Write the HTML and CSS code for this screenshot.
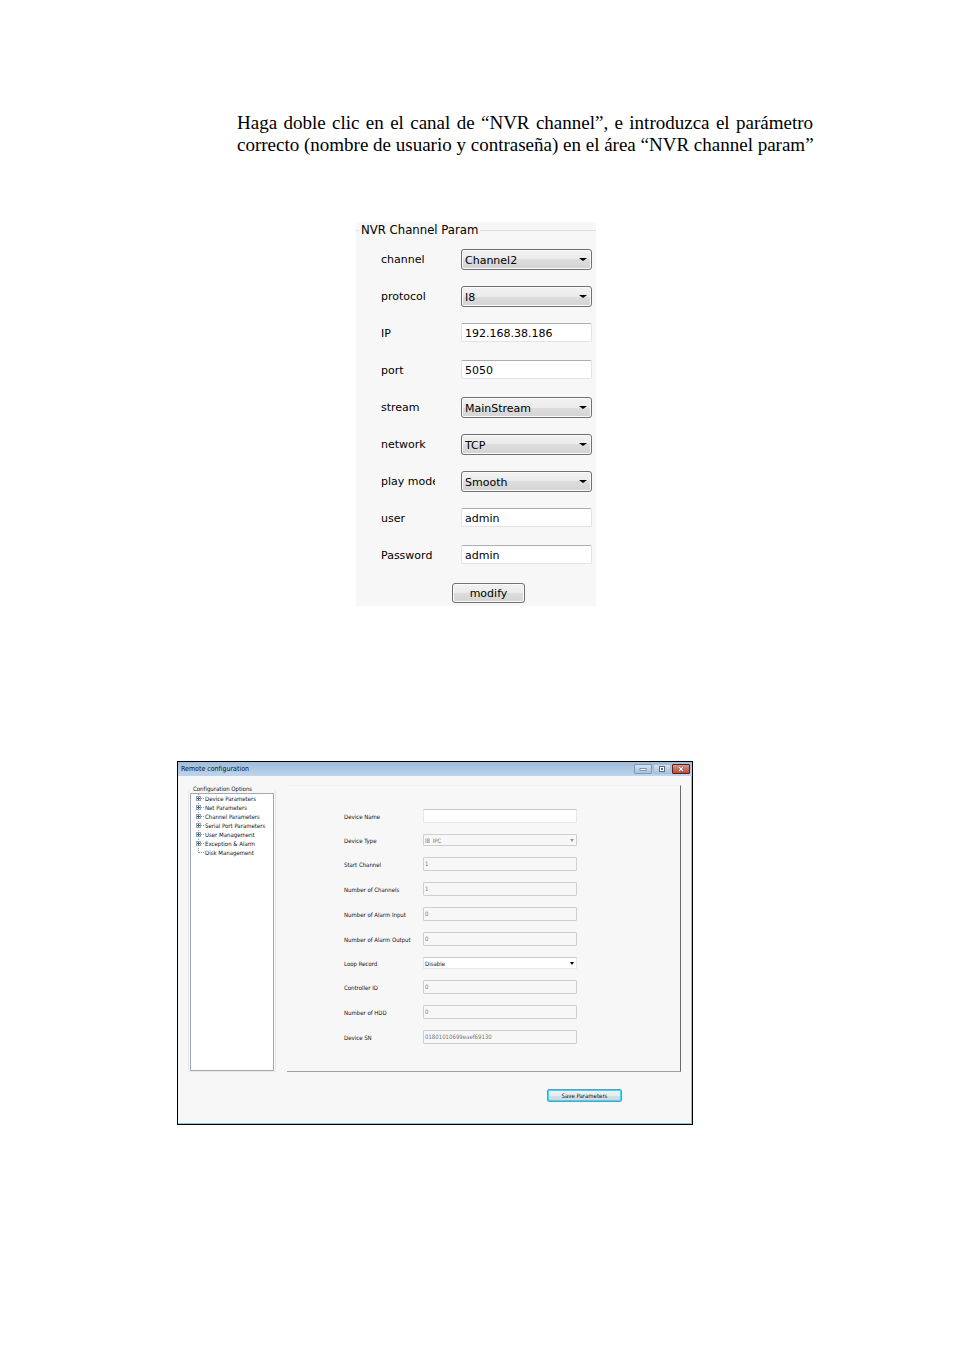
FILE: index.html
```html
<!DOCTYPE html>
<html lang="es">
<head>
    <meta charset="UTF-8">
    <meta name="viewport" content="width=device-width, initial-scale=1.0">
    <title>NVR - Manual de usuario</title>
    <link rel="stylesheet" href="styles.css">
</head>
<body>
    <main class="page">
        <p class="intro">
            <span>Haga doble clic en el canal de “NVR channel”, e introduzca el parámetro</span>
            <span>correcto (nombre de usuario y contraseña) en el área “NVR channel param”</span>
        </p>

        <form class="channel-form">
            <fieldset>
                <legend>NVR Channel Param</legend>
                <div class="row">
                    <label for="channel">channel</label>
                    <div class="combo"><select id="channel"><option>Channel2</option></select></div>
                </div>
                <div class="row">
                    <label for="protocol">protocol</label>
                    <div class="combo"><select id="protocol"><option>I8</option></select></div>
                </div>
                <div class="row">
                    <label for="ip">IP</label>
                    <input type="text" id="ip" value="192.168.38.186">
                </div>
                <div class="row">
                    <label for="port">port</label>
                    <input type="text" id="port" value="5050">
                </div>
                <div class="row">
                    <label for="stream">stream</label>
                    <div class="combo"><select id="stream"><option>MainStream</option></select></div>
                </div>
                <div class="row">
                    <label for="network">network</label>
                    <div class="combo"><select id="network"><option>TCP</option></select></div>
                </div>
                <div class="row">
                    <label for="playMode">play mode</label>
                    <div class="combo"><select id="playMode"><option>Smooth</option></select></div>
                </div>
                <div class="row">
                    <label for="user">user</label>
                    <input type="text" id="user" value="admin">
                </div>
                <div class="row">
                    <label for="password">Password</label>
                    <input type="text" id="password" value="admin">
                </div>
                <button type="button" class="btn-modify">modify</button>
            </fieldset>
        </form>

        <section class="window">
            <header class="title-bar">
                <h2>Remote configuration</h2>
                <div class="window-buttons">
                    <button type="button" aria-label="Minimizar">
                        <svg width="8" height="6" viewBox="0 0 8 6"><rect x="1" y="2.5" width="6" height="2" fill="#fff" stroke="#6d7f94" stroke-width="0.8"/></svg>
                    </button>
                    <button type="button" class="max" aria-label="Maximizar">
                        <svg width="8" height="6" viewBox="0 0 8 6"><rect x="1.5" y="0.5" width="5" height="5" fill="#fff" stroke="#5c6b7d"/><rect x="3" y="2" width="2" height="2" fill="#5c6b7d"/></svg>
                    </button>
                    <button type="button" class="close" aria-label="Cerrar">
                        <svg width="8" height="6" viewBox="0 0 8 6"><path d="M2 1l4 4M6 1l-4 4" stroke="#6b3a3a" stroke-width="2.4"/><path d="M2 1l4 4M6 1l-4 4" stroke="#fff" stroke-width="1.4"/></svg>
                    </button>
                </div>
            </header>

            <div class="window-body">
                <fieldset class="options">
                    <legend>Configuration Options</legend>
                    <ul class="tree">
                        <li class="node">Device Parameters</li>
                        <li class="node">Net Parameters</li>
                        <li class="node">Channel Parameters</li>
                        <li class="node">Serial Port Parameters</li>
                        <li class="node">User Management</li>
                        <li class="node">Exception &amp; Alarm</li>
                        <li class="leaf">Disk Management</li>
                    </ul>
                </fieldset>

                <form class="panel">
                    <div class="field">
                        <label for="deviceName">Device Name</label>
                        <input type="text" id="deviceName">
                    </div>
                    <div class="field">
                        <label for="deviceType">Device Type</label>
                        <div class="combo off"><select id="deviceType" disabled><option>I8_IPC</option></select></div>
                    </div>
                    <div class="field">
                        <label for="startChannel">Start Channel</label>
                        <input type="text" id="startChannel" value="1" disabled>
                    </div>
                    <div class="field">
                        <label for="numChannels">Number of Channels</label>
                        <input type="text" id="numChannels" value="1" disabled>
                    </div>
                    <div class="field">
                        <label for="alarmInput">Number of Alarm Input</label>
                        <input type="text" id="alarmInput" value="0" disabled>
                    </div>
                    <div class="field">
                        <label for="alarmOutput">Number of Alarm Output</label>
                        <input type="text" id="alarmOutput" value="0" disabled>
                    </div>
                    <div class="field">
                        <label for="loopRecord">Loop Record</label>
                        <div class="combo"><select id="loopRecord"><option>Disable</option></select></div>
                    </div>
                    <div class="field">
                        <label for="controllerId">Controller ID</label>
                        <input type="text" id="controllerId" value="0" disabled>
                    </div>
                    <div class="field">
                        <label for="numHdd">Number of HDD</label>
                        <input type="text" id="numHdd" value="0" disabled>
                    </div>
                    <div class="field">
                        <label for="deviceSn">Device SN</label>
                        <input type="text" id="deviceSn" value="01801010699eaef69130" disabled>
                    </div>
                </form>
            </div>

            <footer class="actions">
                <button type="button" class="btn-save">Save Parameters</button>
            </footer>
        </section>
    </main>
</body>
</html>
```
FILE: styles.css
```css
*, *::before, *::after {
    margin: 0;
    padding: 0;
    box-sizing: border-box;
}

body {
    background: #fff;
    color: #000;
}

.page {
    padding: 112px 141px 60px 177px;
}

.intro {
    margin-left: 60px;
    font-family: "Liberation Serif", "Times New Roman", serif;
    font-size: 19px;
    line-height: 22px;
    text-align: justify;
    text-align-last: justify;
}

/* cada línea del párrafo */
.intro span {
    display: block;
    white-space: nowrap;
}

input, select, button {
    font-family: inherit;
    font-size: inherit;
    color: inherit;
}

select {
    appearance: none;
    display: block;
    width: 100%;
}

.combo {
    position: relative;
}

/* flecha del desplegable */
.combo::after {
    content: "";
    position: absolute;
    right: 5px;
    top: 9px;
    border: 4px solid transparent;
    border-top: 4px solid #000;
    border-bottom: none;
    pointer-events: none;
}

/* Parámetros del canal */
.channel-form {
    width: 240px;
    margin: 66px 0 0 179px;
    padding-bottom: 3px;
    background: #f7f7f7;
    font-family: "DejaVu Sans", Verdana, sans-serif;
    font-size: 11px;
}

.channel-form fieldset {
    border: none;
    border-top: 1px solid #d5dfe5;
}

.channel-form legend {
    margin-left: 3px;
    padding: 0 2px;
    font-family: "DejaVu Sans Condensed", Tahoma, sans-serif;
    font-size: 13px;
    line-height: 16px;
    margin-bottom: 11px;
}

.row {
    display: grid;
    grid-template-columns: 54px 131px;
    column-gap: 26px;
    align-items: start;
    height: 37px;
    margin-left: 25px;
}

.row label {
    overflow: hidden;
    white-space: nowrap;
    line-height: 22px;
}

.row input {
    width: 100%;
    height: 19px;
    padding: 1px 3px 0;
    background: #fff;
    border: 1px solid #e2e3ea;
    border-top-color: #abadb3;
    border-radius: 2px;
}

.row select, .btn-modify {
    background: linear-gradient(#f2f2f2, #ebebeb 50%, #dddddd 50%, #d4d4d4);
    border: 1px solid #707070;
    border-radius: 3px;
    box-shadow: inset 0 0 0 1px #fafafa;
}

.row select {
    height: 21px;
    padding: 1px 3px 0;
}

.row .combo::after {
    border-width: 3px 4px 0;
}

.btn-modify {
    display: block;
    width: 73px;
    height: 20px;
    margin: 1px 0 0 96px;
}

/* Ventana de configuración remota */
.window {
    margin: 155px 120px 0 0;
    border: 1px solid #000;
    background: #f7f7f7;
    box-shadow: inset -1px -1px 0 #79c8e6;
    font-family: "DejaVu Sans Condensed", Tahoma, sans-serif;
    font-size: 6px;
    color: #111;
}

.title-bar {
    display: flex;
    justify-content: space-between;
    align-items: center;
    height: 14px;
    padding: 0 2px 0 3px;
    background: linear-gradient(#9fbcd9, #bdd5ee);
}

.title-bar h2 {
    font-size: 7px;
    font-weight: normal;
}

.window-buttons {
    display: flex;
    gap: 1px;
}

.window-buttons button {
    display: flex;
    align-items: center;
    justify-content: center;
    width: 18px;
    height: 10px;
    background: linear-gradient(#d3e2f1, #a9c2dc);
    border: 1px solid #7f97b2;
    border-radius: 1px;
}

.window-buttons .max {
    border-color: #a5bdd8;
}

.window-buttons .close {
    background: linear-gradient(#dd9385, #c14a35);
    border-color: #5c1f24;
}

.window-body {
    display: grid;
    grid-template-columns: 88px 1fr;
    column-gap: 11px;
    padding: 8px 11px 0 10px;
}

.options {
    display: flex;
    flex-direction: column;
    border: 1px solid #e6e8ec;
    border-top: none;
    border-radius: 2px;
}

.options legend {
    margin-left: 2px;
    padding: 0 2px;
    line-height: 9px;
}

.tree {
    height: 278px;
    margin: 0 1px;
    background: #fff;
    border: 1px solid #a3a9b0;
    list-style: none;
}

.tree li {
    position: relative;
    padding-left: 14px;
    line-height: 9px;
    white-space: nowrap;
}

/* líneas y cajas [+] del árbol */
.tree li::before {
    content: "";
    position: absolute;
    left: 7px;
    top: 0;
    width: 6px;
    height: 5px;
    border-left: 1px dotted #999;
    border-bottom: 1px dotted #999;
}

.tree .node::after {
    content: "";
    position: absolute;
    left: 5px;
    top: 2px;
    width: 5px;
    height: 5px;
    border: 1px solid #98a4b4;
    background:
        linear-gradient(#3d5a8c, #3d5a8c) center / 1px 3px no-repeat,
        linear-gradient(#3d5a8c, #3d5a8c) center / 3px 1px no-repeat,
        #fff;
}

.panel {
    display: flex;
    flex-direction: column;
    justify-content: space-between;
    margin-top: 1px;
    padding: 23px 0 27px 57px;
    border-top: 1px solid #f0f0f0;
    border-right: 1px solid #6b6b6b;
    border-bottom: 1px solid #a0a0a0;
}

.field {
    display: grid;
    grid-template-columns: 79px 154px;
    align-items: center;
    white-space: nowrap;
}

.field input, .field select {
    width: 100%;
    height: 14px;
    padding: 0 1px 2px;
    background: #fff;
    border: 1px solid #e2e6ee;
    border-top-color: #c9c9c9;
    border-radius: 1px;
}

.field select {
    height: 12px;
    padding-bottom: 0;
}

.field input:disabled, .field select:disabled {
    background: #f7f7f7;
    border-color: #cfcfcf;
    color: #777;
    opacity: 1;
}

.field .combo::after {
    right: 3px;
    top: 5px;
    border-width: 3px 2px 0;
}

.field .off::after {
    border-top-color: #999;
}

.actions {
    display: flex;
    justify-content: flex-end;
    padding: 17px 70px 22px 0;
}

.btn-save {
    width: 75px;
    height: 13px;
    background: linear-gradient(#f0f5f7, #e4edf1 50%, #d3e0e6 50%, #cbdbe2);
    border: 1px solid #5b9fc0;
    border-radius: 2px;
    box-shadow: inset 0 0 0 1px #3fd3f8;
}
```
